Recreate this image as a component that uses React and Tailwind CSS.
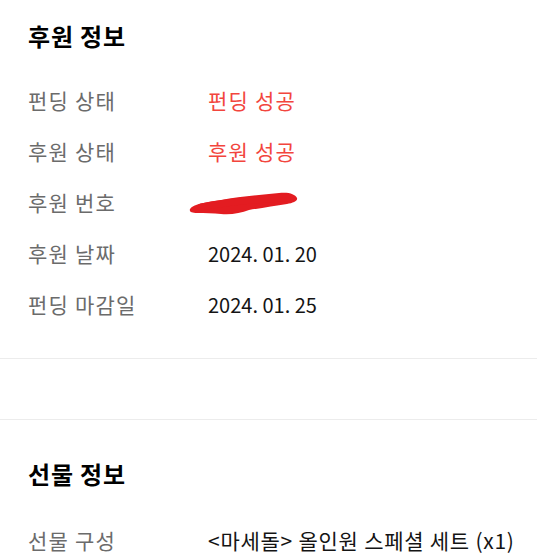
import React from 'react';

const fundingRows = [
  { label: "펀딩 상태", value: "펀딩 성공", tone: "red" },
  { label: "후원 상태", value: "후원 성공", tone: "red" },
  { label: "후원 번호", value: "", tone: "hidden" },
  { label: "후원 날짜", value: "2024. 01. 20", tone: "date" },
  { label: "펀딩 마감일", value: "2024. 01. 25", tone: "date" },
];

function Scribble() {
  return (
    <svg width="114" height="30" viewBox="0 0 114 30" className="-ml-[21px] mt-[2px]">
      <path
        d="M3 20 C6 15 20 13 34 11 C52 8 72 6 92 4 C102 3 108 5 110 9 C111 12 106 14 100 15 C88 17 74 19 62 21 C54 24 44 26 34 25 C26 24 18 24 10 24 C5 24 2 23 3 20 Z"
        fill="#e31c21"
      />
      <path d="M14 18 C40 13 70 10 100 9" stroke="#e31c21" strokeWidth="7" strokeLinecap="round" fill="none" />
    </svg>
  );
}

function Row({ label, value, tone }) {
  let valueClass = "text-[21px] tracking-[1.2px] text-[#f2453d]";
  if (tone === "date") valueClass = "text-[20px] text-[#141414]";
  if (tone === "dark") valueClass = "text-[21px] tracking-[0.75px] text-[#141414]";
  return (
    <div className="flex items-center h-[51px]">
      <div className="w-[180px] shrink-0 text-[21px] tracking-[1.2px] text-[#6b6b6b]">{label}</div>
      {tone === "hidden" ? (
        <Scribble />
      ) : (
        <div className={"whitespace-nowrap " + valueClass}>{value}</div>
      )}
    </div>
  );
}

export default function App() {
  return (
    <div
      className="w-[537px] h-[558px] overflow-hidden bg-white"
      style={{ fontFamily: '"Noto Sans CJK KR", "Noto Sans", sans-serif' }}
    >
      <section className="px-[28px] pt-[20px] pb-[28px] border-b border-[#ececec]">
        <h2 className="text-[24px] leading-[32px] tracking-[0.8px] font-bold text-black">후원 정보</h2>
        <div className="mt-[23px]">
          {fundingRows.map((row) => (
            <Row key={row.label} {...row} />
          ))}
        </div>
      </section>
      <div className="h-[61px] border-b border-[#ececec]" />
      <section className="px-[28px] pt-[38px]">
        <h2 className="text-[24px] leading-[32px] tracking-[0.8px] font-bold text-black">선물 정보</h2>
        <div className="mt-[25px]">
          <Row label="선물 구성" value="<마세돌> 올인원 스페셜 세트 (x1)" tone="dark" />
        </div>
      </section>
    </div>
  );
}
